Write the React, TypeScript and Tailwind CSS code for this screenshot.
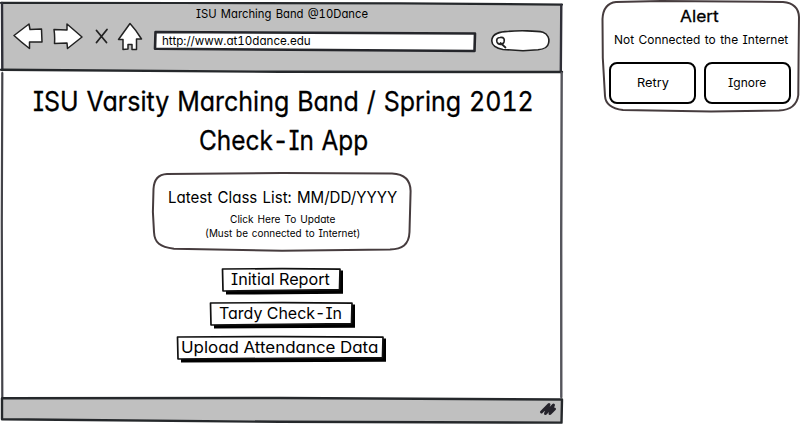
import { useLayoutEffect, useRef, useState } from "react";
import type { ReactNode } from "react";

/** One line of lettering, condensed or widened to fill the width of its box. */
function Lettering({ className, children }: { className: string; children: string }) {
  const box = useRef<HTMLDivElement>(null);
  const text = useRef<HTMLSpanElement>(null);
  const [scale, setScale] = useState(1);
  useLayoutEffect(() => {
    if (box.current && text.current) {
      setScale(box.current.clientWidth / text.current.offsetWidth);
    }
  }, [children]);
  return (
    <div ref={box} className={`shrink-0 whitespace-nowrap ${className}`}>
      <span ref={text} className="inline-block origin-left" style={{ transform: `scaleX(${scale})` }}>
        {children}
      </span>
    </div>
  );
}

/** Hand-drawn outline behind the content of a box. */
function Sketch({ w, h, children }: { w: number; h: number; children: ReactNode }) {
  return (
    <svg
      className="pointer-events-none absolute top-0 left-0 -z-10 overflow-visible"
      width={w}
      height={h}
      viewBox={`0 0 ${w} ${h}`}
      strokeLinejoin="round"
      strokeLinecap="round"
    >
      {children}
    </svg>
  );
}

function ToolIcons() {
  const line = { fill: "#fff", stroke: "#222", strokeWidth: 1.5, strokeLinejoin: "round" as const };
  return (
    <div className="flex h-7 items-start">
      <svg className="ml-[13px]" width="30" height="28" viewBox="0 0 30 28" {...line}>
        <path d="M1 13.5 L16 2 L17 7.5 L28.5 7 L29 20 L16.5 20 L16.5 26.5 Q8 20 1 13.5Z" />
      </svg>
      <svg className="ml-[10px]" width="30" height="28" viewBox="0 0 30 28" {...line}>
        <path d="M1 7.5 L14 8 L14 2 L29 15 L14.5 26.5 L14 21 L1.5 21.5 Q2 14 1 7.5Z" />
      </svg>
      <svg className="ml-[12px]" width="14" height="28" viewBox="0 0 14 28" {...line} strokeWidth="1.8" strokeLinecap="round">
        <path d="M1.5 8.5 L11.5 20.5 M12 7.5 L1.5 20.5" />
      </svg>
      <svg className="ml-[8px]" width="26" height="29" viewBox="0 0 26 29" {...line}>
        <path d="M13 1.5 L1.5 17.5 L6 17.5 L6 27.5 L11 27 L11 22.5 L15 22.5 L15 27.5 L19.5 27.5 L19.5 17 L24.5 17 Q19 8 13 1.5Z" />
      </svg>
    </div>
  );
}

function BrowserHeader() {
  return (
    <header className="relative isolate flex h-[73px] flex-col pt-[6px]">
      <Sketch w={563} h={73}>
        <path d="M2 3 L180 4 L561.5 4.5 L561.5 72 L280 72 L2 69.5Z" fill="#c0c0c0" />
        <path d="M1 2.8 L180 3 L400 3.4 L562 4.6" fill="none" stroke="#25282b" strokeWidth="2.2" />
        <path d="M2 3 L2.3 70 M561.3 5 L560.8 72" fill="none" stroke="#2f2f38" strokeWidth="2.4" />
        <path d="M1 69.8 L280 71.8 L562 72" fill="none" stroke="#25282b" strokeWidth="2.4" />
      </Sketch>
      <Lettering className="ml-[196px] h-4 w-[172px] text-[12px] leading-4">ISU Marching Band @10Dance</Lettering>
      <div className="flex items-start">
        <ToolIcons />
        <div className="relative isolate mt-[9px] ml-[11px] h-5 w-[323px] pl-[8px]">
          <Sketch w={323} h={20}>
            <path d="M1.5 1 L321 2.5 L320.5 20 L1 17.8Z" fill="#fff" stroke="#25262b" strokeWidth="2.6" />
          </Sketch>
          <Lettering className="w-[149px] text-[12px] leading-5">http://www.at10dance.edu</Lettering>
        </div>
        <div className="relative isolate mt-2 ml-[14px] h-[21px] w-[59px]">
          <Sketch w={59} h={21}>
            <path
              d="M14 1.6 C28 .2 46 .8 52 2.2 C57 4 58.6 9 57.6 13 C57 17 53 19.2 47 19.8 L32 20.7 L12 19.5 C5 18.5 .8 15 .8 11 C.8 6 5 2.3 14 1.6Z"
              fill="#fff"
              stroke="#222"
              strokeWidth="1.6"
            />
            <path d="M9 7.5 C13 7 13.8 9 13 12 C12 15 7.2 15.2 6 12 C5 9 6.5 7.7 9 7.5Z M9.5 13 L14.5 17.5" fill="none" stroke="#222" strokeWidth="1.7" />
          </Sketch>
        </div>
      </div>
    </header>
  );
}

function ClassListPanel() {
  return (
    <section className="relative isolate mx-auto mt-[12px] flex h-[80px] w-[260px] flex-col items-center pt-[15px]">
      <Sketch w={260} h={80}>
        <path
          d="M15 2 L130 1 L240 1.4 C253 2 258.5 8 258.6 19 L257.5 60 C257 73 250 77 238 77.5 L130 78.8 L22 76.8 C8 75 2.5 71 2 60 L.9 40 L1.5 17 C2 7 7 2.4 15 2Z"
          fill="#fff"
          stroke="#463c3e"
          strokeWidth="2"
        />
      </Sketch>
      <Lettering className="ml-px w-[229px] text-[16px] leading-5">Latest Class List: MM/DD/YYYY</Lettering>
      <Lettering className="mt-[6px] ml-px w-[105px] text-[10.5px] leading-[14px]">Click Here To Update</Lettering>
      <Lettering className="ml-px w-[155px] text-[10.5px] leading-[14px]">(Must be connected to Internet)</Lettering>
    </section>
  );
}

function SketchButton({ w, className, label, labelClass }: { w: number; className: string; label: string; labelClass: string }) {
  return (
    <button className={`relative isolate flex h-[27px] justify-start ${className}`}>
      <Sketch w={w} h={27}>
        <path d={`M5 22 L${w - 4} 22 L${w - 4} 2.5 L${w} 2.5 L${w} 25.8 L5 26.6Z`} fill="#000" />
        <path d={`M1.5 1 L${w * 0.5} .6 L${w - 3} 1.2 L${w - 3.5} 21.6 L${w * 0.5} 22.3 L2 23Z`} fill="#fff" stroke="#111" strokeWidth="1.7" />
      </Sketch>
      <Lettering className={`text-left text-[16.5px] leading-[22px] ${labelClass}`}>{label}</Lettering>
    </button>
  );
}

function BrowserWindow() {
  return (
    <main className="flex h-[424px] w-[563px] flex-col">
      <BrowserHeader />
      <div className="relative isolate flex h-[324px] flex-col pt-[10px]">
        <Sketch w={563} h={324}>
          <path d="M2.3 0 L1.8 150 L2.3 324" fill="none" stroke="#44444a" strokeWidth="2.2" />
          <path d="M561.7 0 L561.2 160 L561.3 324" fill="none" stroke="#55555c" strokeWidth="2.4" />
        </Sketch>
        <h1 className="[-webkit-text-stroke:0.3px_black]">
          <Lettering className="ml-[33px] w-[501px] text-[27px] leading-[38px]">ISU Varsity Marching Band / Spring 2012</Lettering>
          <Lettering className="ml-[199px] w-[169px] text-[27px] leading-[39px]">Check-In App</Lettering>
        </h1>
        <ClassListPanel />
        <nav className="mt-[16px] flex flex-col gap-[7px]">
          <SketchButton w={122} className="ml-[221px] w-[122px]" label="Initial Report" labelClass="ml-[10px] w-[99px]" />
          <SketchButton w={146} className="ml-[209px] w-[146px]" label="Tardy Check-In" labelClass="ml-[10px] w-[123px]" />
          <SketchButton w={210} className="ml-[176px] w-[210px]" label="Upload Attendance Data" labelClass="ml-[5px] w-[197px]" />
        </nav>
      </div>
      <footer className="relative isolate h-[27px] w-[563px]">
        <Sketch w={563} h={27}>
          <path d="M2 1.5 L562 2.5 L562 25.5 L280 24 L2 22.5Z" fill="#c0c0c0" />
          <path d="M2 1.3 L280 1 L562 2.5 L561.5 25.6 L280 24.8 L2 22.3Z" fill="none" stroke="#25282b" strokeWidth="2.4" />
          <path d="M541.5 15 L549 7.5 L545.5 16.5 L553.5 8 L550 16.5 L554.5 12" fill="none" stroke="#25232b" strokeWidth="3" />
        </Sketch>
      </footer>
    </main>
  );
}

function AlertDialog() {
  return (
    <aside className="relative isolate ml-[38px] flex h-[113px] w-[199px] flex-col items-center pt-[6px]">
      <Sketch w={199} h={113}>
        <path
          d="M15 2 L60 1 L182 2 C193 3 197.6 8 198 17 L197.6 55 L197.3 95 C196 106 188 110 178 110.6 L110 111.5 L22 110 C10 108.5 4.5 104 4 96 L1.8 58 L1.5 19 C2 9 6 3 15 2Z"
          fill="#fff"
          stroke="#463c3e"
          strokeWidth="2"
        />
      </Sketch>
      <Lettering className="-ml-[2px] w-[39px] text-[16px] leading-5 [-webkit-text-stroke:0.3px_black]">Alert</Lettering>
      <Lettering className="mt-[3px] w-[174px] text-[12px] leading-[22px]">Not Connected to the Internet</Lettering>
      <div className="mt-[11px] mr-[2px] flex gap-2">
        <button className="flex h-[42px] w-[87px] items-center justify-center rounded-[8px] border-2 border-black bg-white">
          <Lettering className="w-[32px] text-[12px] leading-4">Retry</Lettering>
        </button>
        <button className="flex h-[42px] w-[87px] items-center justify-center rounded-[8px] border-2 border-black bg-white">
          <Lettering className="w-[38px] text-[12px] leading-4">Ignore</Lettering>
        </button>
      </div>
    </aside>
  );
}

export default function App() {
  return (
    <div className="flex h-[424px] w-[800px] items-start overflow-hidden bg-white text-black [word-spacing:0.08em] [font-family:Inter,'Open_Sans',sans-serif] [font-feature-settings:'cv11','cv08','tnum']">
      <BrowserWindow />
      <AlertDialog />
    </div>
  );
}
